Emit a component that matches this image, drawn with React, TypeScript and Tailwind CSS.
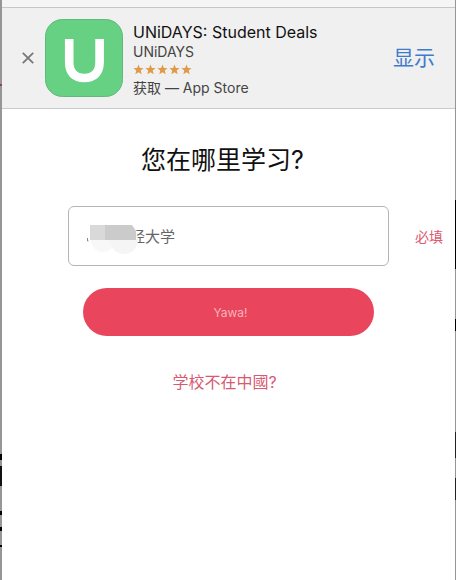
const APP_FONT = "font-[Inter,'Noto_Sans_CJK_SC',sans-serif]";

function AppIcon() {
  return (
    <svg viewBox="0 0 78 78" className="size-[78px] shrink-0" aria-label="UNiDAYS">
      <rect x="0.5" y="0.5" width="77" height="77" rx="17" fill="#66d182" stroke="#62b87c" />
      <path d="M24.2 20 V43 C24.2 54 30 59 39.3 59 C48.6 59 54.6 54 54.6 43 V20" fill="none" stroke="#fff" strokeWidth="8.6" />
    </svg>
  )
}

function Stars() {
  return (
    <div className="flex h-[17px] items-center gap-px" role="img" aria-label="5 / 5">
      {[1, 2, 3, 4, 5].map((n) => (
        <svg key={n} viewBox="0 0 22 22" className="size-[11px]" fill="#e09a45">
          <path d="M11 1 L13.7 8 L21.2 8.4 L15.4 13.1 L17.3 20.5 L11 16.4 L4.7 20.5 L6.6 13.1 L0.8 8.4 L8.3 8 Z" />
        </svg>
      ))}
    </div>
  )
}

function LeftEdge() {
  return (
    <div className="flex w-0.5 shrink-0 flex-col bg-[#969696]">
      <div className="h-[84px]" />
      <div className="h-0.5 bg-[#8d4545]" />
      <div className="h-[368px]" />
      <div className="h-1.5 bg-black" />
      <div className="h-1.5" />
      <div className="h-5 bg-[#111]" />
      <div className="h-[25px]" />
      <div className="h-1 bg-black" />
      <div className="h-3" />
      <div className="h-1 bg-black" />
      <div className="h-3.5" />
      <div className="h-0.5 bg-black" />
    </div>
  )
}

function RightEdge() {
  return (
    <div className="flex w-px shrink-0 flex-col bg-[#969696]">
      <div className="h-[200px]" />
      <div className="h-[69px] bg-black" />
      <div className="h-[50px]" />
      <div className="h-3 bg-black" />
      <div className="h-[101px]" />
      <div className="h-[26px] bg-[#222]" />
      <div className="h-5" />
      <div className="h-[22px] bg-[#222]" />
    </div>
  )
}

export default function App() {
  return (
    <div className={`flex min-h-screen bg-white ${APP_FONT}`}>
      <LeftEdge />

      <div className="min-w-0 flex-1">
        <div className="h-2 border-b border-[#c5c8ca] bg-[#f5f5f5]" />

        {/* App Store banner */}
        <header className="flex h-[101px] items-center border-b border-[#c8cacb] bg-[#f0f0f0] px-5">
          <button type="button" aria-label="关闭" className="shrink-0">
            <svg viewBox="0 0 12 12" className="size-3" stroke="#777" strokeWidth="1.8">
              <path d="M0.8 0.8 L11.2 11.2 M11.2 0.8 L0.8 11.2" />
            </svg>
          </button>
          <div className="ml-[11px] shrink-0">
            <AppIcon />
          </div>
          <div className="ml-[10px] min-w-0 flex-1 pt-1 whitespace-nowrap">
            <p className="text-[16px] leading-5 text-[#111]">UNiDAYS: Student Deals</p>
            <p className="text-[14px] leading-[19px] text-[#444]">UNiDAYS</p>
            <Stars />
            <p className="text-[14px] leading-5 text-[#444]">获取 — App Store</p>
          </div>
          <a href="#" className="shrink-0 text-[21px] text-[#3e7bcb]">显示</a>
        </header>

        <main className="pt-[33px]">
          <h1 className="pr-3 text-center text-[25px] leading-9 text-[#111]">您在哪里学习?</h1>

          <form>
            <div className="mt-7 grid grid-cols-[66px_1fr_66px] items-center">
              <div className="relative col-start-2">
                <input
                  id="school"
                  type="text"
                  defaultValue="　　　经大学"
                  className="h-[60px] w-full rounded-md border border-[#b5b5b5] bg-white px-4 pb-0.5 text-[15px] text-[#666] outline-none"
                />
                {/* Hidden part of the school name */}
                <svg viewBox="0 0 52 32" className="absolute top-[17px] left-[18px] h-8 w-[52px]">
                  <path d="M1.5 15 V18 H2.5" fill="none" stroke="#888" />
                  <circle cx="17" cy="17" r="12" fill="#f8f8f8" />
                  <circle cx="38" cy="17" r="14" fill="#f5f5f5" />
                  <rect x="4" y="2" width="15" height="15" fill="#d9d9d9" />
                  <path d="M19 2 H46 L50 8 V17 H19 Z" fill="#cbcbcb" />
                </svg>
              </div>
              <label htmlFor="school" className="pl-[26px] text-[14px] whitespace-nowrap text-[#dc5a70]">必填</label>
            </div>

            <div className="mt-[22px] px-[81px]">
              <button type="submit" className="h-12 w-full rounded-full bg-[#e9455c] pt-0.5 pl-1 text-[12px] text-[#f8b3bc]">Yawa!</button>
            </div>
          </form>

          <p className="mt-[34px] pr-2 text-center">
            <a href="#" className="text-[16px] leading-6 text-[#d65a72]">学校不在中國?</a>
          </p>
        </main>
      </div>

      <RightEdge />
    </div>
  )
}
